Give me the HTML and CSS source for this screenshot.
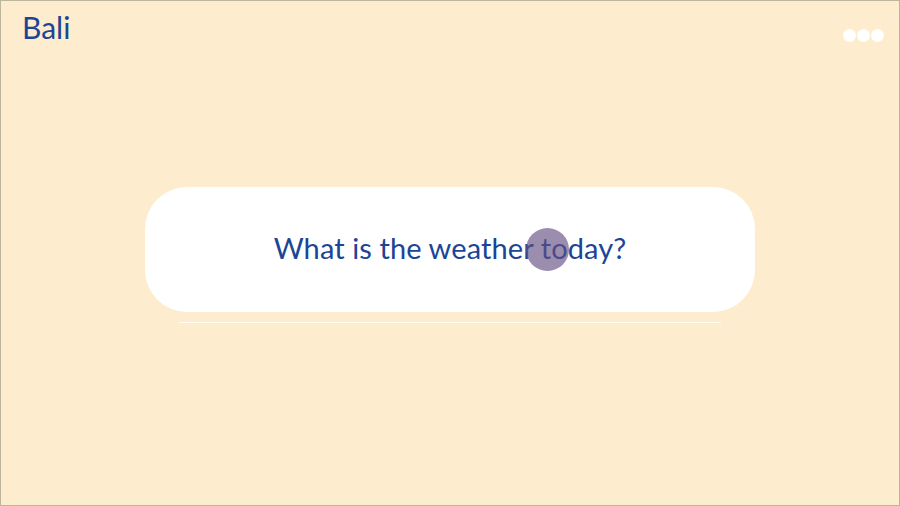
FILE: index.html
```html
<!DOCTYPE html>
<html lang="en">
<head>
<meta charset="utf-8">
<title>Bali</title>
<link rel="stylesheet" href="styles.css">
</head>
<body>
<div class="frame">
  <header class="topbar">
    <h1 class="title">Bali</h1>
    <div class="dots"><span></span><span></span><span></span></div>
  </header>
  <main class="stage">
    <div class="card">
      <p class="question">What is the weather today?</p>
      <span class="touch"></span>
    </div>
    <div class="rule"></div>
  </main>
</div>
</body>
</html>
```
FILE: styles.css
```css
* { box-sizing: border-box; }
html, body { margin: 0; padding: 0; }
body {
  width: 900px;
  height: 506px;
  font-family: Lato, "Noto Sans", sans-serif;
  background: #fdeccd;
}
.frame {
  width: 900px;
  height: 506px;
  border: 1px solid #bdb69c;
  background: #fdeccd;
  display: flex;
  flex-direction: column;
}
.topbar {
  display: flex;
  justify-content: space-between;
  align-items: flex-start;
  padding: 8px 15px 0 21px;
  height: 60px;
}
.title {
  margin: 0;
  font-size: 30px;
  font-weight: 400;
  color: #1b4596;
  line-height: 36px;
  letter-spacing: 0;
}
.dots {
  display: flex;
  gap: 1px;
  margin-top: 20px;
}
.dots span {
  width: 13px;
  height: 13px;
  border-radius: 50%;
  background: #ffffff;
}
.stage {
  flex: 1;
  display: flex;
  flex-direction: column;
  align-items: center;
  padding-top: 126px;
}
.card {
  position: relative;
  width: 610px;
  height: 125px;
  padding-bottom: 5px;
  background: #ffffff;
  border-radius: 42px;
  display: flex;
  align-items: center;
  justify-content: center;
}
.question {
  margin: 0;
  font-size: 29px;
  color: #1b4596;
  letter-spacing: 0.1px;
}
.touch {
  position: absolute;
  left: 381px;
  top: 41px;
  width: 43px;
  height: 43px;
  border-radius: 50%;
  background: rgba(100, 80, 130, 0.65);
}
.rule {
  width: 542px;
  height: 1px;
  background: #fffcf6;
  margin-top: 10px;
}
```
